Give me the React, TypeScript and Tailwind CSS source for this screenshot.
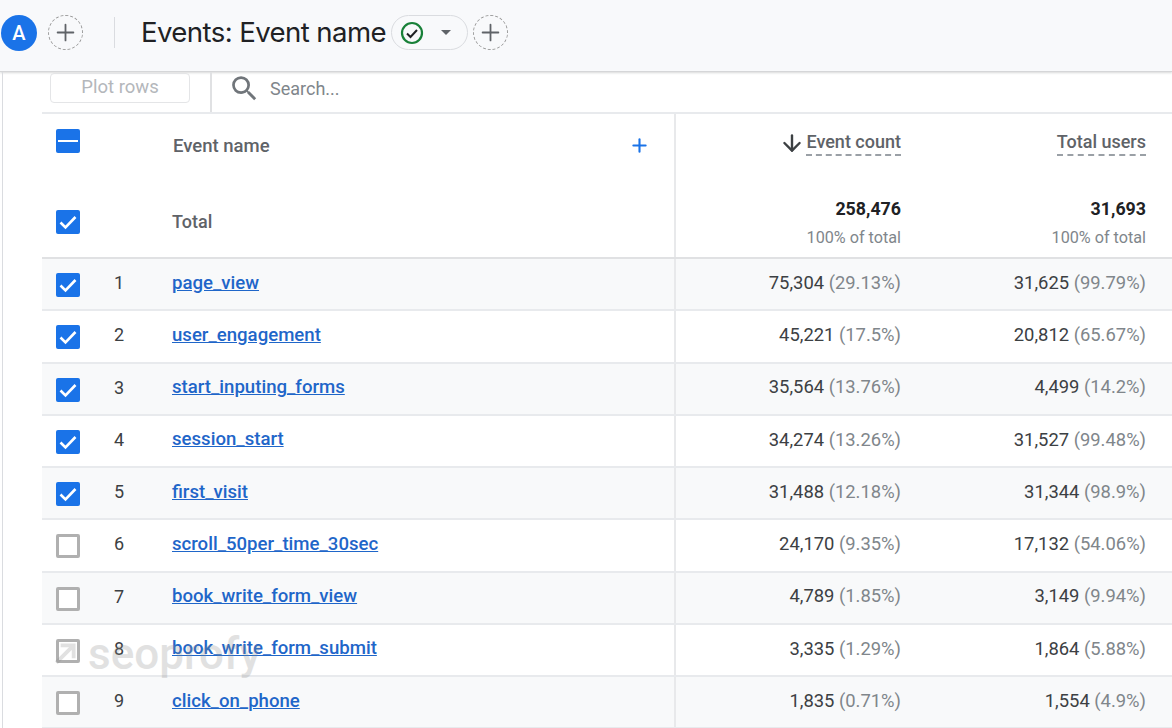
import { Plus, ArrowDown } from "lucide-react";

const rows = [
  { name: "page_view", count: "75,304", countPct: "(29.13%)", users: "31,625", usersPct: "(99.79%)", checked: true },
  { name: "user_engagement", count: "45,221", countPct: "(17.5%)", users: "20,812", usersPct: "(65.67%)", checked: true },
  { name: "start_inputing_forms", count: "35,564", countPct: "(13.76%)", users: "4,499", usersPct: "(14.2%)", checked: true },
  { name: "session_start", count: "34,274", countPct: "(13.26%)", users: "31,527", usersPct: "(99.48%)", checked: true },
  { name: "first_visit", count: "31,488", countPct: "(12.18%)", users: "31,344", usersPct: "(98.9%)", checked: true },
  { name: "scroll_50per_time_30sec", count: "24,170", countPct: "(9.35%)", users: "17,132", usersPct: "(54.06%)", checked: false },
  { name: "book_write_form_view", count: "4,789", countPct: "(1.85%)", users: "3,149", usersPct: "(9.94%)", checked: false },
  { name: "book_write_form_submit", count: "3,335", countPct: "(1.29%)", users: "1,864", usersPct: "(5.88%)", checked: false },
  { name: "click_on_phone", count: "1,835", countPct: "(0.71%)", users: "1,554", usersPct: "(4.9%)", checked: false },
];

const Checked = () => (
  <div className="flex h-[24px] w-[24px] items-center justify-center rounded-[2px] bg-[#1a73e8]">
    <svg viewBox="0 0 24 24" className="h-[24px] w-[24px]" fill="none" stroke="white" strokeWidth="2.6">
      <path d="M4.5 12.5l5 5 10-10.5" />
    </svg>
  </div>
);

const Unchecked = () => <div className="h-[24px] w-[24px] rounded-[2px] border-[3px] border-[#b0b0b0] bg-white" />;

const DashedPlus = () => (
  <div className="flex h-[35px] w-[35px] items-center justify-center rounded-full border border-dashed border-[#9a9a9a] text-[#5f6368]">
    <Plus size={27} strokeWidth={1.6} />
  </div>
);

export default function App() {
  return (
    <div className="relative h-[728px] w-[1172px] overflow-hidden bg-white font-['Roboto',sans-serif]">
      <header className="flex h-[72px] items-center border-b border-[#d5d6d8] bg-[#f8f9fb] pb-[6px] pl-[1px] shadow-[0_1px_2px_rgba(60,64,67,0.2)]">
        <div className="flex h-[36px] w-[36px] items-center justify-center rounded-full bg-[#1a73e8] text-[20px] font-medium text-white">A</div>
        <div className="ml-[11px]"><DashedPlus /></div>
        <div className="ml-[31px] h-[31px] w-px bg-[#dadce0]" />
        <h1 className="ml-[26px] font-['Inter','Roboto',sans-serif] text-[27.6px] leading-none tracking-[-0.6px] text-[#202124]">Events: Event name</h1>
        <div className="ml-[5px] flex h-[35px] w-[77px] items-center rounded-full border border-[#dadce0] pl-[8px]">
          <svg viewBox="0 0 24 24" className="h-[24px] w-[24px]" fill="none" stroke="#188038" strokeWidth="2.2">
            <circle cx="12" cy="12" r="10" />
            <path d="M7 12.5l3.5 3.5 6.5-7" stroke="#202124" strokeWidth="2" />
          </svg>
          <div className="ml-[17px] h-0 w-0 border-x-[5px] border-t-[5px] border-x-transparent border-t-[#5f6368]" />
        </div>
        <div className="ml-[5px]"><DashedPlus /></div>
      </header>

      <div className="ml-[2px] border-l border-[#dadce0] pl-[39px]">
        <div className="flex h-[42px] border-b-2 border-[#e8eaed]">
          <div className="flex w-[168px] items-start pl-[8px] pt-[1px]">
            <div className="flex h-[30px] w-[140px] items-center justify-center rounded-[4px] border border-[#e4e5e7] text-[18.5px] text-[#b4b7bb]">Plot rows</div>
          </div>
          <div className="flex items-center border-l-2 border-[#e0e1e3] pb-[8px] pl-[16px]">
            <svg viewBox="0 0 24 24" className="h-[33px] w-[33px]" fill="#70757a">
              <path d="M15.5 14h-.79l-.28-.27A6.471 6.471 0 0 0 16 9.5 6.5 6.5 0 1 0 9.5 16c1.61 0 3.09-.59 4.23-1.57l.27.28v.79l5 4.99L20.49 19l-4.99-5zm-6 0C7.01 14 5 11.99 5 9.5S7.01 5 9.5 5 14 7.01 14 9.5 11.99 14 9.5 14z" />
            </svg>
            <span className="ml-[9px] text-[18px] text-[#80868b]">Search...</span>
          </div>
        </div>

        <div className="flex h-[145px] border-b-2 border-[#e0e1e3]">
          <div className="flex w-[632px] flex-col">
            <div className="flex h-[64px] items-center">
              <div className="mb-[9px] ml-[14px] flex h-[24px] w-[24px] items-center justify-center rounded-[2px] bg-[#1a73e8]">
                <div className="h-[2px] w-[20px] bg-white" />
              </div>
              <span className="ml-[93px] pt-[2px] text-[18.5px] font-medium text-[#5f6368]">Event name</span>
              <Plus size={21} strokeWidth={2.4} className="ml-[359px] text-[#1a73e8]" />
            </div>
            <div className="flex h-[81px] items-center pt-[9px]">
              <div className="ml-[14px]"><Checked /></div>
              <span className="ml-[92px] text-[18px] font-medium text-[#5f6368]">Total</span>
            </div>
          </div>
          <div className="flex-1 border-l-2 border-[#e8e9eb]">
            <div className="flex h-[64px]">
              <div className="flex w-[225px] justify-end pt-[16px]">
                <ArrowDown size={26} strokeWidth={2.2} className="mr-[1px] text-[#3c4043]" />
                <span className="h-[26px] border-b-2 border-dashed border-[#9aa0a6] text-[18px] font-medium leading-[24px] text-[#5f6368]">Event count</span>
              </div>
              <div className="flex w-[245px] justify-end pt-[16px]">
                <span className="h-[26px] border-b-2 border-dashed border-[#9aa0a6] text-[18px] font-medium leading-[24px] text-[#5f6368]">Total users</span>
              </div>
            </div>
            <div className="flex pt-[19px]">
              <div className="w-[225px] text-right">
                <div className="text-[17.8px] font-bold leading-[24px] text-[#202124]">258,476</div>
                <div className="mt-[5px] text-[16.2px] leading-[24px] text-[#80868b]">100% of total</div>
              </div>
              <div className="w-[245px] text-right">
                <div className="text-[17.8px] font-bold leading-[24px] text-[#202124]">31,693</div>
                <div className="mt-[5px] text-[16.2px] leading-[24px] text-[#80868b]">100% of total</div>
              </div>
            </div>
          </div>
        </div>

        {rows.map((row, i) => (
          <div key={row.name} className={`flex h-[52.25px] border-b-2 border-[#e8eaed] text-[18.4px] ${i % 2 === 0 ? "bg-[#f8f9fa]" : "bg-white"}`}>
            <div className="flex w-[632px] items-center pt-[2px]">
              <div className="ml-[14px]">{row.checked ? <Checked /> : <Unchecked />}</div>
              <span className="w-[54px] pb-[5px] pl-[34px] text-[18px] text-[#3c4043]">{i + 1}</span>
              <a className="ml-[38px] pb-[3px] text-[18.6px] font-medium text-[#1f66c9] underline">{row.name}</a>
            </div>
            <div className="flex flex-1 items-center border-l-2 border-[#e8e9eb] pb-[3px]">
              <div className="w-[225px] text-right text-[#3c4043]">{row.count} <span className="text-[#80868b]">{row.countPct}</span></div>
              <div className="w-[245px] text-right text-[#3c4043]">{row.users} <span className="text-[#80868b]">{row.usersPct}</span></div>
            </div>
          </div>
        ))}
      </div>

      {/* watermark over the rows */}
      <div className="pointer-events-none absolute left-[52px] top-[630px] flex items-center gap-[10px] text-[#8a8a8a] opacity-25">
        <svg viewBox="0 0 24 24" className="h-[26px] w-[26px]" fill="none" stroke="currentColor" strokeWidth="3.5">
          <path d="M4 20L19 5M8 4h12v12" />
        </svg>
        <span className="text-[44px] font-medium leading-[48px]">seoprofy</span>
      </div>
    </div>
  );
}
